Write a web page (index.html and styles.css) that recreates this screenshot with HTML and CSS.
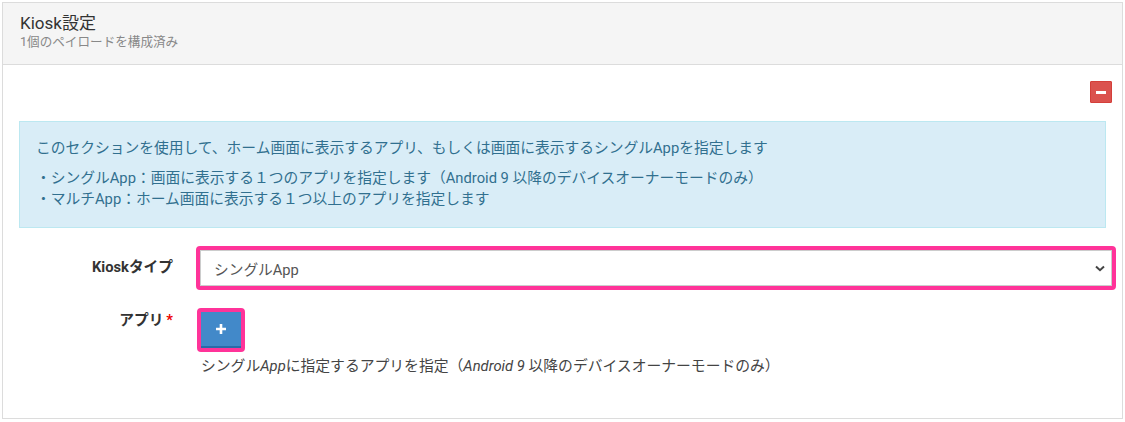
FILE: index.html
```html
<!DOCTYPE html>
<html lang="ja">
<head>
<meta charset="utf-8">
<link rel="stylesheet" href="styles.css">
</head>
<body>
<div class="panel">
  <div class="panel-head">
    <div class="title">Kiosk設定</div>
    <div class="subtitle">1個のペイロードを構成済み</div>
  </div>
  <div class="panel-body">
    <div class="tools">
      <button class="btn-remove" type="button"><span class="minus"></span></button>
    </div>
    <div class="info">
      <p class="lead">このセクションを使用して、ホーム画面に表示するアプリ、もしくは画面に表示するシングルAppを指定します</p>
      <p class="list">・シングルApp：画面に表示する１つのアプリを指定します（Android 9 以降のデバイスオーナーモードのみ）<br>・マルチApp：ホーム画面に表示する１つ以上のアプリを指定します</p>
    </div>
    <div class="row">
      <label class="label">Kioskタイプ</label>
      <div class="field">
        <div class="hl hl-select">
          <div class="select">
            <span>シングルApp</span>
            <svg class="caret" width="10" height="7" viewBox="0 0 10 7"><path d="M1 1.5 L5 5.2 L9 1.5" fill="none" stroke="#444" stroke-width="2"/></svg>
          </div>
        </div>
      </div>
    </div>
    <div class="row row-app">
      <label class="label">アプリ<span class="req">*</span></label>
      <div class="field">
        <div class="hl hl-btn">
          <button class="btn-add" type="button"><svg width="12" height="12" viewBox="0 0 12 12"><path d="M6 1 V11 M1 6 H11" stroke="#fff" stroke-width="2.6"/></svg></button>
        </div>
        <div class="help">シングル<i>App</i>に指定するアプリを指定（<i>Android 9</i> 以降のデバイスオーナーモードのみ）</div>
      </div>
    </div>
  </div>
</div>
</body>
</html>
```
FILE: styles.css
```css
html, body {
  margin: 0;
  padding: 0;
  background: #fff;
}
body {
  padding: 2px 2px 0 2px;
  font-family: Roboto, "Noto Sans CJK JP", sans-serif;
  color: #333;
}
.panel {
  border: 1px solid #dcdcdc;
  box-sizing: border-box;
  width: 1121px;
  height: 417px;
}
.panel-head {
  background: #f5f5f5;
  border-bottom: 1px solid #dcdcdc;
  height: 62px;
  box-sizing: border-box;
  padding: 9px 17px 0;
}
.title {
  font-size: 17px;
  line-height: 22px;
  color: #333;
}
.subtitle {
  font-size: 12.6px;
  line-height: 16px;
  color: #888;
  margin-top: 0;
}
.panel-body {
  padding: 16px 10px 0 16px;
}
.tools {
  display: flex;
  justify-content: flex-end;
  padding-right: 0;
}
.btn-remove {
  width: 22px;
  height: 22px;
  background: #db524e;
  border: 1px solid #d43f3a;
  border-radius: 1px;
  padding: 0;
  display: flex;
  align-items: center;
  justify-content: center;
}
.minus {
  width: 10px;
  height: 3px;
  background: #fff;
}
.info {
  margin-top: 18px;
  width: 1087px;
  box-sizing: border-box;
  background: #d9edf7;
  border: 1px solid #bce8f1;
  color: #31708f;
  font-size: 14.75px;
  padding: 16px 16px 18px;
  height: 107px;
}
.info p { margin: 0; }
.lead { line-height: 21px; }
.list { margin-top: 9px !important; line-height: 21px; }
.row {
  display: flex;
  margin-top: 18px;
}
.label {
  width: 154px;
  text-align: right;
  font-weight: bold;
  font-size: 14.7px;
  color: #333;
  padding-top: 9px;
  flex: none;
}
.field {
  margin-left: 23px;
  flex: 1;
}
.hl {
  border: 4px solid #ff3399;
  border-radius: 4px;
  box-sizing: border-box;
}
.hl-select {
  width: 920px;
  height: 44px;
}
.select {
  height: 36px;
  box-sizing: border-box;
  border: 1px solid #ccc;
  background: #fff;
  display: flex;
  align-items: center;
  justify-content: space-between;
  padding: 0 6px 0 13px;
  font-size: 14.7px;
  color: #555;
}
.caret { margin-top: 1px; }
.row-app { margin-top: 18px; }
.row-app .label { padding-top: 0; }
.req { color: #e00; margin-left: 3px; }
.hl-btn {
  width: 48px;
  height: 44px;
  margin-left: 1px;
}
.btn-add {
  width: 40px;
  height: 36px;
  background: #4289c9;
  border: none;
  border-bottom: 2px solid #2a6aa8;
  border-radius: 0;
  padding: 0;
  display: flex;
  align-items: center;
  justify-content: center;
}
.help {
  margin-top: 4px;
  margin-left: 5px;
  font-size: 14.8px;
  line-height: 21px;
  color: #444;
}
```
